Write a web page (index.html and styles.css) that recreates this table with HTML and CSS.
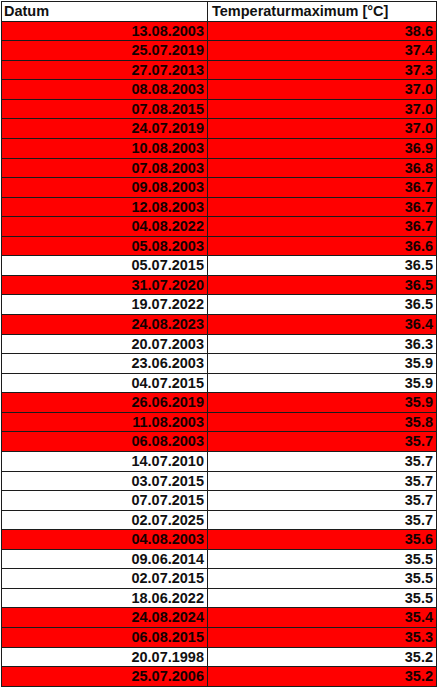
FILE: index.html
```html
<!DOCTYPE html>
<html lang="de">
<head>
<meta charset="utf-8">
<title>Temperaturmaximum</title>
<link rel="stylesheet" href="styles.css">
</head>
<body>
<div class="sheet">
  <div class="cell head">Datum</div><div class="cell head head2">Temperaturmaximum [°C]</div>
  <div class="cell hot">13.08.2003</div><div class="cell hot">38.6</div>
  <div class="cell hot">25.07.2019</div><div class="cell hot">37.4</div>
  <div class="cell hot">27.07.2013</div><div class="cell hot">37.3</div>
  <div class="cell hot">08.08.2003</div><div class="cell hot">37.0</div>
  <div class="cell hot">07.08.2015</div><div class="cell hot">37.0</div>
  <div class="cell hot">24.07.2019</div><div class="cell hot">37.0</div>
  <div class="cell hot">10.08.2003</div><div class="cell hot">36.9</div>
  <div class="cell hot">07.08.2003</div><div class="cell hot">36.8</div>
  <div class="cell hot">09.08.2003</div><div class="cell hot">36.7</div>
  <div class="cell hot">12.08.2003</div><div class="cell hot">36.7</div>
  <div class="cell hot">04.08.2022</div><div class="cell hot">36.7</div>
  <div class="cell hot">05.08.2003</div><div class="cell hot">36.6</div>
  <div class="cell">05.07.2015</div><div class="cell">36.5</div>
  <div class="cell hot">31.07.2020</div><div class="cell hot">36.5</div>
  <div class="cell">19.07.2022</div><div class="cell">36.5</div>
  <div class="cell hot">24.08.2023</div><div class="cell hot">36.4</div>
  <div class="cell">20.07.2003</div><div class="cell">36.3</div>
  <div class="cell">23.06.2003</div><div class="cell">35.9</div>
  <div class="cell">04.07.2015</div><div class="cell">35.9</div>
  <div class="cell hot">26.06.2019</div><div class="cell hot">35.9</div>
  <div class="cell hot">11.08.2003</div><div class="cell hot">35.8</div>
  <div class="cell hot">06.08.2003</div><div class="cell hot">35.7</div>
  <div class="cell">14.07.2010</div><div class="cell">35.7</div>
  <div class="cell">03.07.2015</div><div class="cell">35.7</div>
  <div class="cell">07.07.2015</div><div class="cell">35.7</div>
  <div class="cell">02.07.2025</div><div class="cell">35.7</div>
  <div class="cell hot">04.08.2003</div><div class="cell hot">35.6</div>
  <div class="cell">09.06.2014</div><div class="cell">35.5</div>
  <div class="cell">02.07.2015</div><div class="cell">35.5</div>
  <div class="cell">18.06.2022</div><div class="cell">35.5</div>
  <div class="cell hot">24.08.2024</div><div class="cell hot">35.4</div>
  <div class="cell hot">06.08.2015</div><div class="cell hot">35.3</div>
  <div class="cell">20.07.1998</div><div class="cell">35.2</div>
  <div class="cell hot">25.07.2006</div><div class="cell hot">35.2</div>
</div>
</body>
</html>
```
FILE: styles.css
```css
html, body {
  margin: 0;
  padding: 0;
  background: #ffffff;
}

body {
  font-family: "Liberation Sans", Arial, sans-serif;
  height: 692px;
  overflow: hidden;
}

.sheet {
  display: grid;
  grid-template-columns: 205px 228px;
  grid-auto-rows: 18.57px;
  gap: 1px;
  width: max-content;
  margin: 1px 0 0 1px;
  border: 1px solid #1c1c1c;
  background: #1c1c1c;
}

.cell {
  background: #ffffff;
  color: #111111;
  font-size: 14.5px;
  font-weight: bold;
  line-height: 18.57px;
  text-align: right;
  padding: 0 3px 0 2px;
  white-space: nowrap;
}

.cell.hot {
  background: #ff0000;
  color: #140000;
}

.cell.head {
  text-align: left;
  padding-left: 2px;
}

.cell.head2 {
  padding-left: 4px;
}
```
